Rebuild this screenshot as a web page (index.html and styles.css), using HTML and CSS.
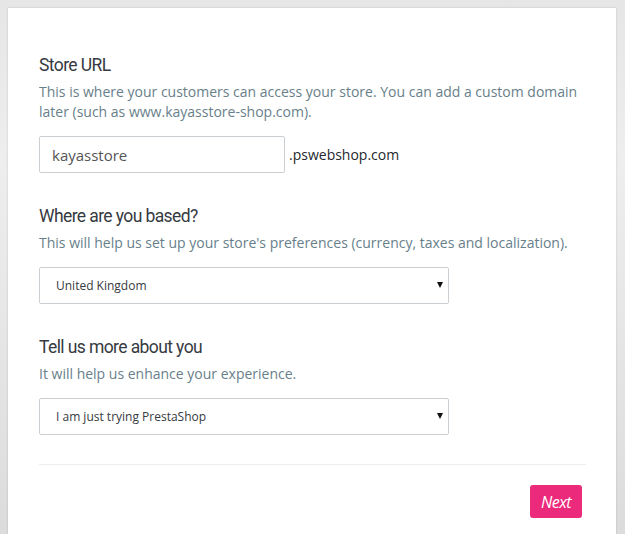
FILE: index.html
```html
<!DOCTYPE html>
<html lang="en">
<head>
    <meta charset="UTF-8">
    <meta name="viewport" content="width=device-width, initial-scale=1.0">
    <title>Create your store</title>
    <link rel="stylesheet" href="styles.css">
</head>
<body>
    <div class="card">
        <form id="storeForm">
            <div class="section">
                <h2>Store URL</h2>
                <p class="help">This is where your customers can access your store. You can add a custom domain later (such as www.kayasstore-shop.com).</p>
                <div class="url-row">
                    <input type="text" class="text-input" name="store" value="kayasstore">
                    <span class="suffix">.pswebshop.com</span>
                </div>
            </div>

            <div class="section">
                <h2>Where are you based?</h2>
                <p class="help">This will help us set up your store's preferences (currency, taxes and localization).</p>
                <div class="select-wrap">
                    <select name="country">
                        <option>United Kingdom</option>
                        <option>France</option>
                        <option>Spain</option>
                    </select>
                </div>
            </div>

            <div class="section">
                <h2>Tell us more about you</h2>
                <p class="help">It will help us enhance your experience.</p>
                <div class="select-wrap">
                    <select name="profile">
                        <option>I am just trying PrestaShop</option>
                        <option>I already sell online</option>
                    </select>
                </div>
            </div>

            <div class="actions">
                <button type="button" class="btn-next">Next</button>
            </div>
        </form>
    </div>
</body>
</html>
```

FILE: styles.css
```css
body {
    margin: 0;
    padding: 8px 9px 0 8px;
    font-family: 'Open Sans', sans-serif;
    background: linear-gradient(to bottom, #e6e6e6, #eeeeee 30%, #e4e4e4 70%, #dcdcdc);
    height: 534px;
    box-sizing: border-box;
    overflow: hidden;
}

.card {
    background: #fff;
    box-shadow: 0 0 2px rgba(0, 0, 0, 0.18);
    padding: 45px 30px 40px 31px;
    min-height: 600px;
}

.section {
    margin-bottom: 31px;
}

h2 {
    margin: 0 0 5px 0;
    font-family: 'Roboto', sans-serif;
    font-weight: 400;
    font-size: 17.5px;
    letter-spacing: -0.6px;
    line-height: 24px;
    color: #363a41;
}

.help {
    margin: 0 0 14px 0;
    font-size: 14px;
    line-height: 20px;
    color: #68808a;
}

.url-row {
    display: flex;
    align-items: center;
    gap: 4px;
}

.text-input {
    width: 246px;
    height: 37px;
    box-sizing: border-box;
    padding: 0 12px;
    border: 1px solid #c9cfd2;
    border-radius: 2px;
    font-family: 'Open Sans', sans-serif;
    font-size: 15px;
    color: #555;
}

.suffix {
    font-size: 14px;
    color: #25282d;
}

.select-wrap {
    position: relative;
    width: 410px;
}

.select-wrap select {
    appearance: none;
    -webkit-appearance: none;
    width: 100%;
    height: 37px;
    box-sizing: border-box;
    padding: 0 16px;
    border: 1px solid #c9cfd2;
    border-radius: 2px;
    background: #fff;
    font-family: 'Open Sans', sans-serif;
    font-size: 12px;
    color: #363a41;
}

/* little black arrow on the right of the select */
.select-wrap::after {
    content: "";
    position: absolute;
    right: 6px;
    top: 15px;
    border-left: 3.5px solid transparent;
    border-right: 3.5px solid transparent;
    border-top: 6px solid #111;
}

.actions {
    border-top: 1px solid #eeeeee;
    margin-top: -2px;
    padding-top: 20px;
    display: flex;
    justify-content: flex-end;
    padding-right: 4px;
}

.btn-next {
    width: 52px;
    height: 33px;
    border: none;
    border-radius: 3px;
    background: #ec2a7c;
    color: #fff;
    font-family: 'Open Sans', sans-serif;
    font-style: italic;
    font-size: 16px;
    letter-spacing: -0.6px;
    cursor: pointer;
}
```
